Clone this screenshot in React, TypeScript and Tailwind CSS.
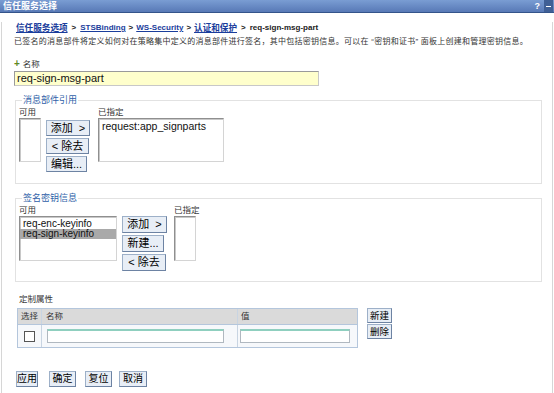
import React from "react";

const Btn = ({ children, className = "" }: { children: React.ReactNode; className?: string }) => (
  <button
    className={
      "flex items-center justify-center border border-[#9db0c8] border-r-[#6d83a3] border-b-[#6d83a3] bg-[#e8eef6] text-black leading-none whitespace-nowrap " +
      className
    }
  >
    {children}
  </button>
);

const ListBox = ({ className = "", children }: { className?: string; children?: React.ReactNode }) => (
  <div
    className={
      "border border-[#8f8f8f] border-r-[#d4d4d4] border-b-[#d4d4d4] bg-white shadow-[inset_1px_1px_0_#c8c8c8] " +
      className
    }
  >
    {children}
  </div>
);

export default function App() {
  return (
    <div className="w-[554px] h-[393px] bg-white overflow-hidden font-['Liberation_Sans','Noto_Sans_CJK_SC',sans-serif] text-black">
      {/* title bar */}
      <div className="h-[13px] flex items-center bg-gradient-to-b from-[#7a9dd3] to-[#5879b6] border-b border-[#34548a]">
        <span className="pl-[3px] text-[9px] leading-none font-bold text-white">信任服务选择</span>
        <span className="ml-auto text-[9px] leading-none font-bold text-white mr-[4px]">?</span>
        <span className="w-[9px] h-[12px] bg-[#3f5f95] flex items-center justify-center mr-[1px]">
          <span className="block w-[5px] h-[1px] bg-white" />
        </span>
      </div>

      <div className="ml-[1px] w-[552px] h-[380px] border-l border-r border-[#d6d6d6] pl-[12px]">
        {/* breadcrumb */}
        <div className="mt-[9px] h-[12px] leading-[12px] text-[8px] font-bold flex items-center pl-[2px] whitespace-nowrap">
          <span className="text-[#1a3d9c] underline text-[8.6px]">信任服务选项</span>
          <span className="mx-[4px] text-[#222]">&gt;</span>
          <span className="text-[#1a3d9c] underline">STSBinding</span>
          <span className="mx-[3px] text-[#222]">&gt;</span>
          <span className="text-[#1a3d9c] underline">WS-Security</span>
          <span className="mx-[3px] text-[#222]">&gt;</span>
          <span className="text-[#1a3d9c] underline text-[8.6px]">认证和保护</span>
          <span className="mx-[4px] text-[#222]">&gt;</span>
          <span className="text-[#222]">req-sign-msg-part</span>
        </div>
        {/* description */}
        <div className="mt-[3px] h-[10px] leading-[10px] text-[8px] tracking-[0.25px] text-[#333] whitespace-nowrap">
          已签名的消息部件将定义如何对在策略集中定义的消息部件进行签名，其中包括密钥信息。可以在 “密钥和证书” 面板上创建和管理密钥信息。
        </div>
        {/* name */}
        <div className="mt-[12px] h-[10px] leading-[10px] text-[8.5px] text-[#333] flex items-center">
          <span className="text-[#5f8a1f] font-bold mr-[3px] text-[10px]">+</span>名称
        </div>
        <div className="mt-[2px] w-[305px] h-[15px] border border-[#9a9a9a] border-r-[#c8c8c8] border-b-[#c8c8c8] bg-[#ffffcc] flex items-center pl-[2px] text-[11px] leading-none text-[#111]">
          req-sign-msg-part
        </div>

        {/* fieldset 1 */}
        <fieldset className="mt-[8px] ml-[1px] w-[527px] border border-[#e2e2e2] pl-[3px] pb-[11px]">
          <legend className="ml-[3px] px-[1px] h-[12px] leading-[12px] text-[9px] text-[#2f5fa8]">消息部件引用</legend>
          <div className="flex pt-[1px]">
            <div className="flex flex-col">
              <div className="h-[10px] leading-[10px] text-[8.5px] text-[#333]">可用</div>
              <ListBox className="mt-[1px] w-[22px] h-[44px]" />
            </div>
            <div className="flex flex-col gap-[2px] ml-[5px] mt-[13px]">
              <Btn className="w-[44px] h-[16px] text-[11px]">添加 &nbsp;&gt;</Btn>
              <Btn className="w-[43px] h-[16px] text-[11px]">&lt; 除去</Btn>
              <Btn className="w-[41px] h-[16px] text-[11px]">编辑...</Btn>
            </div>
            <div className="flex flex-col ml-[8px]">
              <div className="h-[10px] leading-[10px] text-[8.5px] text-[#333]">已指定</div>
              <ListBox className="mt-[1px] w-[126px] h-[44px] pl-[3px] pt-[1px]">
                <div className="text-[10.5px] leading-[12px] text-[#111]">request:app_signparts</div>
              </ListBox>
            </div>
          </div>
        </fieldset>

        {/* fieldset 2 */}
        <fieldset className="mt-[8px] ml-[1px] w-[527px] border border-[#e2e2e2] pl-[3px] pb-[10px]">
          <legend className="ml-[3px] px-[1px] h-[12px] leading-[12px] text-[9px] text-[#2f5fa8]">签名密钥信息</legend>
          <div className="flex pt-[1px]">
            <div className="flex flex-col">
              <div className="h-[10px] leading-[10px] text-[8.5px] text-[#333]">可用</div>
              <ListBox className="mt-[1px] w-[98px] h-[45px] pt-[2px]">
                <div className="pl-[3px] text-[10px] leading-[10px] h-[10px] text-[#111]">req-enc-keyinfo</div>
                <div className="pl-[3px] text-[10px] leading-[10px] h-[10px] bg-[#a9a9a9] text-[#111]">req-sign-keyinfo</div>
              </ListBox>
            </div>
            <div className="flex flex-col gap-[2px] ml-[5px] mt-[11px]">
              <Btn className="w-[45px] h-[17px] text-[11px]">添加 &nbsp;&gt;</Btn>
              <Btn className="w-[42px] h-[17px] text-[11px]">新建...</Btn>
              <Btn className="w-[44px] h-[17px] text-[11px]">&lt; 除去</Btn>
            </div>
            <div className="flex flex-col ml-[7px]">
              <div className="h-[10px] leading-[10px] text-[8.5px] text-[#333]">已指定</div>
              <ListBox className="mt-[1px] w-[22px] h-[45px]" />
            </div>
          </div>
        </fieldset>

        {/* custom properties */}
        <div className="mt-[12px] ml-[5px] h-[10px] leading-[10px] text-[8.5px] text-[#333]">定制属性</div>
        <div className="mt-[4px] ml-[3px] flex items-start">
          <div className="w-[341px] border border-[#b4c6dc]">
            <div className="flex h-[16px] bg-[#dadada] border-b border-[#b4c6dc] text-[8.5px] text-[#333] leading-none">
              <div className="w-[24px] flex items-center pl-[3px] border-r border-[#c8d4e2]">选择</div>
              <div className="w-[196px] flex items-center pl-[4px] border-r border-[#c8d4e2]">名称</div>
              <div className="flex-1 flex items-center pl-[3px]">值</div>
            </div>
            <div className="flex h-[22px] bg-[#f6f8fb] items-center">
              <div className="w-[24px] h-full flex items-center justify-center border-r border-[#c8d4e2]">
                <div className="w-[11px] h-[11px] border border-[#555] bg-white" />
              </div>
              <div className="w-[196px] h-full flex items-center pl-[5px] border-r border-[#c8d4e2]">
                <div className="w-[177px] h-[14px] bg-white border border-[#b0b8c0] border-t-2 border-t-[#8fcfbf]" />
              </div>
              <div className="flex-1 h-full flex items-center pl-[2px]">
                <div className="w-[110px] h-[14px] bg-white border border-[#b0b8c0] border-t-2 border-t-[#8fcfbf]" />
              </div>
            </div>
          </div>
          <div className="ml-[9px] flex flex-col gap-[1px]">
            <Btn className="w-[25px] h-[15px] text-[9.5px]">新建</Btn>
            <Btn className="w-[25px] h-[15px] text-[9.5px]">删除</Btn>
          </div>
        </div>

        {/* bottom buttons */}
        <div className="mt-[23px] ml-[2px] flex">
          <Btn className="w-[22px] h-[16px] text-[10px]">应用</Btn>
          <Btn className="ml-[11px] w-[27px] h-[16px] text-[10px]">确定</Btn>
          <Btn className="ml-[9px] w-[27px] h-[16px] text-[10px]">复位</Btn>
          <Btn className="ml-[7px] w-[28px] h-[16px] text-[10px]">取消</Btn>
        </div>
      </div>
    </div>
  );
}
